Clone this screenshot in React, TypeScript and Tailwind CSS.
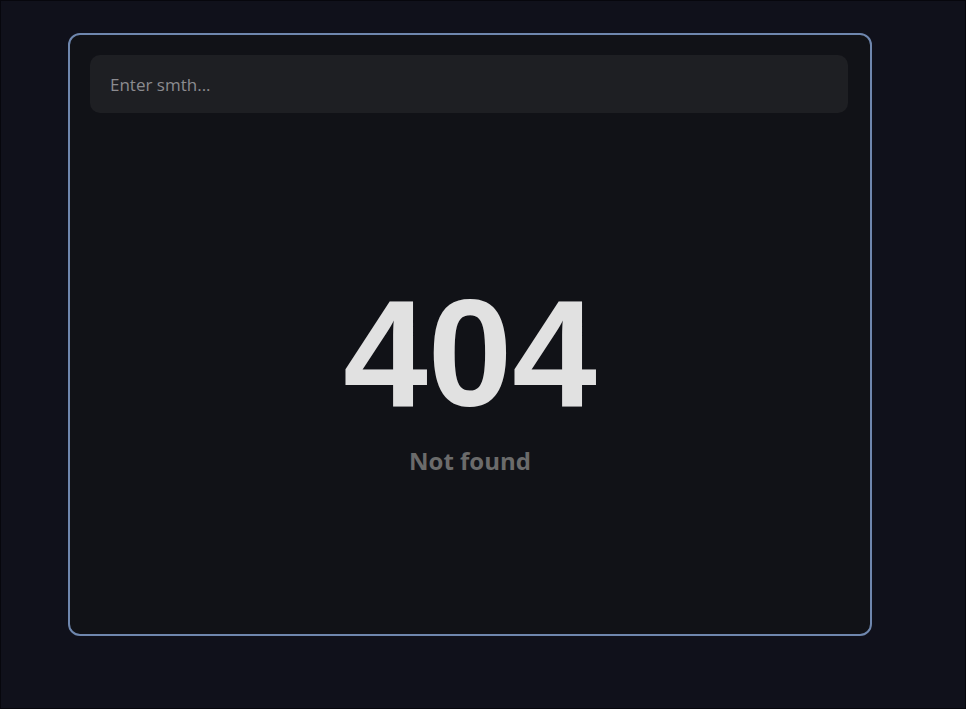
import React from 'react';

const App = () => {
  return (
    <div className="h-[709px] w-full bg-[#10111b] border border-[#07070d] pt-[32px] pl-[67px] font-['Open_Sans',sans-serif]">
      <div className="w-[804px] h-[603px] rounded-xl border-2 border-[#6f87ae] bg-[#111217] p-5 flex flex-col">
        <input
          type="text"
          placeholder="Enter smth..."
          className="w-[758px] h-[58px] rounded-[10px] bg-[#1e1f23] px-5 text-[17px] text-[#d0d0d0] placeholder:text-[#8b8b8f] outline-none"
        />
        <div className="mt-[164px] flex flex-col items-center">
          <h1 className="font-['Liberation_Sans',Arial,sans-serif] font-bold text-[152px] leading-none text-[#e1e1e1]">
            404
          </h1>
          <p className="mt-[16px] text-2xl leading-8 font-bold text-[#6b6b6b]">Not found</p>
        </div>
      </div>
    </div>
  );
};

export default App;
